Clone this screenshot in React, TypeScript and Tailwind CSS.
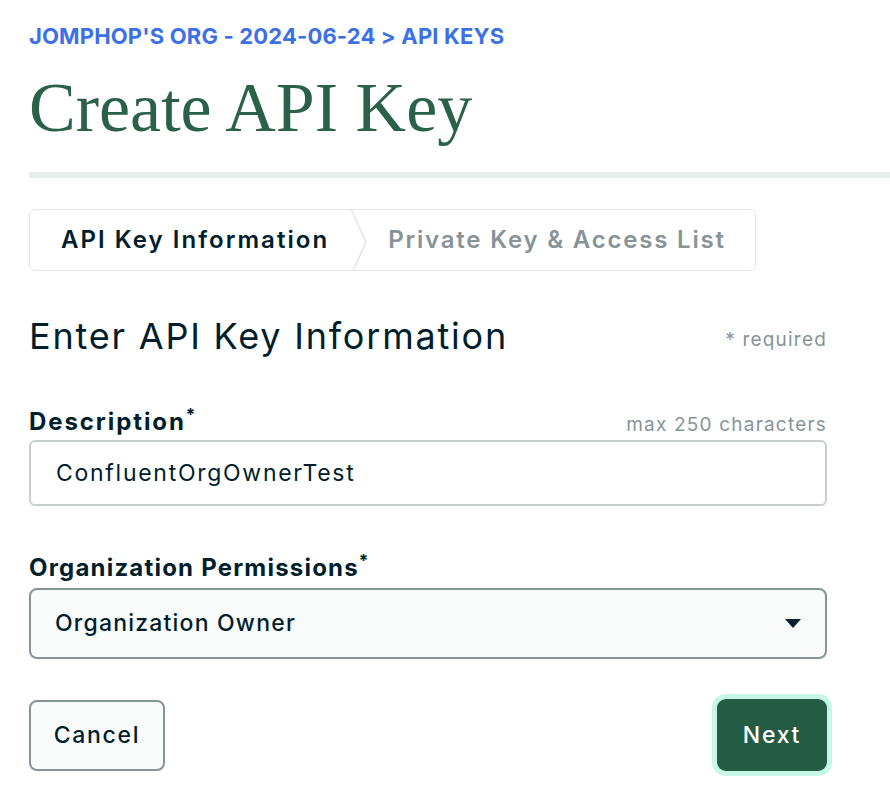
import { useState } from "react";

export default function App() {
  const [description, setDescription] = useState("ConfluentOrgOwnerTest");

  return (
    <div className="min-h-screen bg-white font-['Inter',sans-serif] text-[#001e2b]">
      <div className="pl-[29px] pt-[23px]">
        <div className="text-[22px] font-bold leading-[26px] tracking-[0.15px] text-[#3c70e6]">
          JOMPHOP'S ORG - 2024-06-24 &gt; API KEYS
        </div>
        <h1 className="mt-[19px] font-['Liberation_Serif',serif] text-[70px] leading-[80px] text-[#2b6148]">
          Create API Key
        </h1>
        <div className="mt-[24px] h-[6px] bg-[#e8edeb]" />
      </div>

      <div className="w-[856px] px-[29px] pt-[31px] tracking-[0.075em]">
        {/* step tabs */}
        <div className="flex h-[62px] w-[727px] items-center rounded-[6px] border border-[#e3e8e6]">
          <div className="pl-[31px] pr-[20px] text-[24px] font-semibold tracking-[0.085em] text-[#001e2b]">
            API Key Information
          </div>
          <svg width="20" height="62" viewBox="0 0 20 62" className="shrink-0">
            <path d="M2 0 L17 33 L4 62" fill="none" stroke="#e1e6e4" strokeWidth="1.5" />
          </svg>
          <div className="pl-[19px] text-[24px] font-semibold tracking-[0.075em] text-[#889397]">
            Private Key &amp; Access List
          </div>
        </div>

        <div className="mt-[43px] flex w-[798px] items-end justify-between">
          <h2 className="text-[36px] font-normal leading-[44px] tracking-[0.05em]">Enter API Key Information</h2>
          <span className="mb-[4px] text-[19px] text-[#889397]">* required</span>
        </div>

        <div className="mt-[49px] w-[798px]">
          <div className="flex items-end justify-between">
            <label className="text-[24px] font-bold leading-[30px] tracking-[0.08em]">
              Description<span className="relative -top-[9px] text-[17px]">*</span>
            </label>
            <span className="text-[19px] text-[#889397]">max 250 characters</span>
          </div>
          <input
            value={description}
            onChange={(e) => setDescription(e.target.value)}
            className="mt-[1px] h-[66px] w-full rounded-[6px] border-2 border-[#c8cecd] bg-white px-[25px] text-[23px] tracking-[0.075em] text-[#001e2b] outline-none"
          />
        </div>

        <div className="mt-[47px] w-[798px]">
          <label className="block text-[24px] font-bold leading-[30px]">
            Organization Permissions<span className="relative -top-[9px] text-[17px]">*</span>
          </label>
          <div className="mt-[3px] flex h-[71px] w-full items-center justify-between rounded-[8px] border-2 border-[#889397] bg-[#f9fbfa] px-[24px]">
            <span className="text-[23px] font-medium">Organization Owner</span>
            <svg width="16" height="9" viewBox="0 0 16 9">
              <path d="M0 0 L16 0 L8 9 Z" fill="#001e2b" />
            </svg>
          </div>
        </div>

        <div className="mt-[40px] flex w-[798px] items-center justify-between">
          <button className="h-[71px] w-[136px] rounded-[8px] border-2 border-[#889397] bg-[#f9fbfa] text-[23px] font-medium tracking-[0.075em] text-[#001e2b]">
            Cancel
          </button>
          <button className="h-[72px] w-[110px] rounded-[9px] bg-[#235b44] text-[23px] font-medium tracking-[0.075em] text-white ring-[5px] ring-[#c6f7e6]">
            Next
          </button>
        </div>
      </div>
    </div>
  );
}
